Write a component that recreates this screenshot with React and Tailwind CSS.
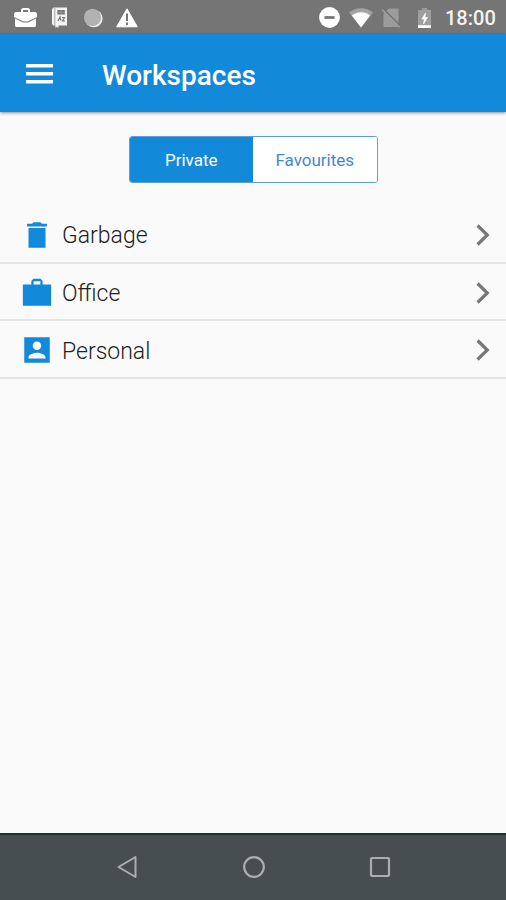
import { useState } from 'react';

const TrashIcon = () => (
  <svg className="size-[34px]" viewBox="0 0 24 24" fill="currentColor">
    <path d="M6 21h12V7H6v14zM19 4h-3.500l-1-1h-5l-1 1H5v2h14V4z" />
  </svg>
);

const BriefcaseIcon = () => (
  <svg className="size-[34px]" viewBox="0 0 24 24" fill="currentColor">
    <path d="M22 6h-6V3.500L14.600 2H9.400L8 3.500V6H2v15h20V6zm-7.600 0H9.600V3.700h4.800V6z" />
  </svg>
);

const PersonIcon = () => (
  <svg className="size-[34px]" viewBox="0 0 24 24" fill="currentColor">
    <path d="M3 3v18h18V3H3zm12 6c0 1.660-1.340 3-3 3s-3-1.340-3-3 1.340-3 3-3 3 1.340 3 3zm-9 8c0-2 4-3.100 6-3.100s6 1.100 6 3.100v1H6v-1z" />
  </svg>
);

const ChevronIcon = () => (
  <svg className="h-[22px] w-[14px] text-[#777777]" viewBox="0 0 14 22" fill="none" stroke="currentColor" strokeWidth="3.2">
    <path d="M1.600 1.500L11.300 11l-9.700 9.500" />
  </svg>
);

const workspaces = [
  { name: 'Garbage', Icon: TrashIcon },
  { name: 'Office', Icon: BriefcaseIcon },
  { name: 'Personal', Icon: PersonIcon },
];

const StatusBar = () => (
  <div className="flex h-[34px] items-center justify-between bg-[#757575] pt-px pr-[11px] pl-[14px] text-white">
    {/* Notifications */}
    <div className="flex items-center">
      <svg className="h-5 w-[23px]" viewBox="0 0 23 20" fill="currentColor">
        <path d="M7 4V1.500L8.500 0h6L16 1.500V4h5.500L23 5.500V9l-9.500 4.500h-4L0 9V5.500L1.500 4H7zm2 0h5V2H9v2z" />
        <path d="M1 10.600l8 4h5l8-4V18l-1 1H2l-1-1z" />
      </svg>
      <svg className="ml-[15px] h-[21px] w-4" viewBox="0 0 16 21">
        <path d="M1.500.5H15v18H6.500V21L5 19.800 3.500 21v-2.500h-2L0 17V2z" fill="#f3f3f3" />
        <path d="M2.800 1v17" stroke="#a5a5a5" strokeWidth="1" />
        <path d="M5.300 3h7.500v4.500H5.300z" fill="#777" />
        <path d="M9 3v4.500M6 5.200h6" stroke="#aaa" strokeWidth=".6" />
        <path d="M6 14l2-4 .8 3.500M10 10.500h2.500L10.500 14H13" stroke="#777" strokeWidth="1.200" fill="none" />
      </svg>
      <svg className="ml-[15px] size-5" viewBox="0 0 20 20">
        <circle cx="10.800" cy="10.500" r="8.800" fill="#ededed" />
        <circle cx="9.500" cy="9.300" r="8.600" fill="#b2b2b2" />
      </svg>
      <svg className="ml-[13px] h-5 w-[22px]" viewBox="0 0 22 20">
        <path d="M11 .8L21.300 18.800H.7z" fill="#fff" stroke="#fff" strokeWidth="1" strokeLinejoin="round" />
        <path d="M11 5.500v7.500M11 14.500v2.500" stroke="#757575" strokeWidth="2" />
      </svg>
    </div>

    {/* System state */}
    <div className="flex items-center">
      <svg className="size-[21px]" viewBox="0 0 21 21">
        <circle cx="10.500" cy="10.500" r="10.400" fill="#fff" />
        <path d="M5.500 10.500h10" stroke="#757575" strokeWidth="2.800" />
      </svg>
      <svg className="ml-[9px] h-5 w-6" viewBox="0 0 24 20">
        <path d="M0 4.500C7-1.300 17-1.300 24 4.500L12 19.500z" fill="#a3a3a3" />
        <path d="M2.800 7.500c5.600-4.200 12.800-4.200 18.400 0L12 19.500z" fill="#fff" />
      </svg>
      <svg className="ml-2 h-5 w-5" viewBox="0 0 20 20">
        <path d="M8 .5h8.500q1 0 1 1V18q0 1-1 1h-13q-1 0-1-1V6z" fill="#9b9b9b" />
        <path d="M2.200.8L20 18.600" stroke="#757575" strokeWidth="1.800" />
        <path d="M1 1.500l18 18" stroke="#9b9b9b" strokeWidth="1.600" />
      </svg>
      <svg className="ml-[17px] h-[22px] w-[13px]" viewBox="0 0 13 22">
        <path d="M0 3h4V1h5v2h4v18H0z" fill="#9e9e9e" />
        <path d="M0 18.200h13V21H0z" fill="#fff" />
        <path d="M7.500 6L3.800 12h2.500l-.8 5L9.500 10.500H7z" fill="#fff" stroke="#fff" strokeWidth=".6" />
      </svg>
      <span className="ml-[14px] w-[50px] pt-px text-[20px] leading-none font-medium whitespace-nowrap text-[#f4f4f4]">18:00</span>
    </div>
  </div>
);

const NavigationBar = () => (
  <div className="flex h-[67px] items-center justify-between border-t-2 border-[#193331] bg-[#464e52] pr-[115px] pb-px pl-[116px] text-[#a9aeb0]">
    <svg className="size-[22px]" viewBox="0 0 22 22" fill="none" stroke="currentColor" strokeWidth="2" strokeLinejoin="round">
      <path d="M19.500 1v20L2.500 11z" />
    </svg>
    <svg className="size-[22px]" viewBox="0 0 22 22" fill="none" stroke="currentColor" strokeWidth="2.200">
      <circle cx="11" cy="11" r="9.800" />
    </svg>
    <svg className="size-[22px]" viewBox="0 0 22 22" fill="none" stroke="currentColor" strokeWidth="2.200">
      <rect x="2" y="2" width="18" height="18" rx="1" />
    </svg>
  </div>
);

export default function App() {
  const [tab, setTab] = useState('Private');

  return (
    <div className="flex h-screen flex-col overflow-hidden bg-[#fafafa] font-[Roboto,sans-serif]">
      <StatusBar />

      <header className="flex h-[78px] items-center bg-[#1389d9] pt-0.5 pl-[26px] text-white shadow-[0_1px_3px_rgba(0,0,0,0.45)]">
        <button aria-label="Menu">
          <svg className="h-5 w-[27px]" viewBox="0 0 27 20" fill="currentColor">
            <path d="M0 0h27v3.500H0zM0 8h27v3.500H0zM0 16h27v3.500H0z" />
          </svg>
        </button>
        <h1 className="ml-[49px] pt-[3px] text-[28px] leading-none font-medium">Workspaces</h1>
      </header>

      <main className="flex-1 pt-6">
        {/* Private / Favourites switch */}
        <div className="mx-auto flex h-[47px] w-[249px] overflow-hidden rounded-[3px] border border-[#5b9fdf] bg-white text-[17px]">
          {['Private', 'Favourites'].map((name) => (
            <button
              key={name}
              onClick={() => setTab(name)}
              className={`flex-1 pt-0.5 ${tab === name ? 'bg-[#1389d9] text-white' : 'bg-white text-[#3f87d5]'}`}
            >
              {name}
            </button>
          ))}
        </div>

        <ul className="mt-[23px]">
          {workspaces.map(({ name, Icon }) => (
            <li
              key={name}
              className="flex h-[57.700px] items-center border-b-2 border-[#e4e4e4] pt-0.5 pr-4 pl-5 text-[#1389d9]"
            >
              <Icon />
              <span className="ml-2 flex-1 pt-[2px] text-[23px] leading-none font-light text-[#222222]">{name}</span>
              <ChevronIcon />
            </li>
          ))}
        </ul>
      </main>

      <NavigationBar />
    </div>
  );
}
